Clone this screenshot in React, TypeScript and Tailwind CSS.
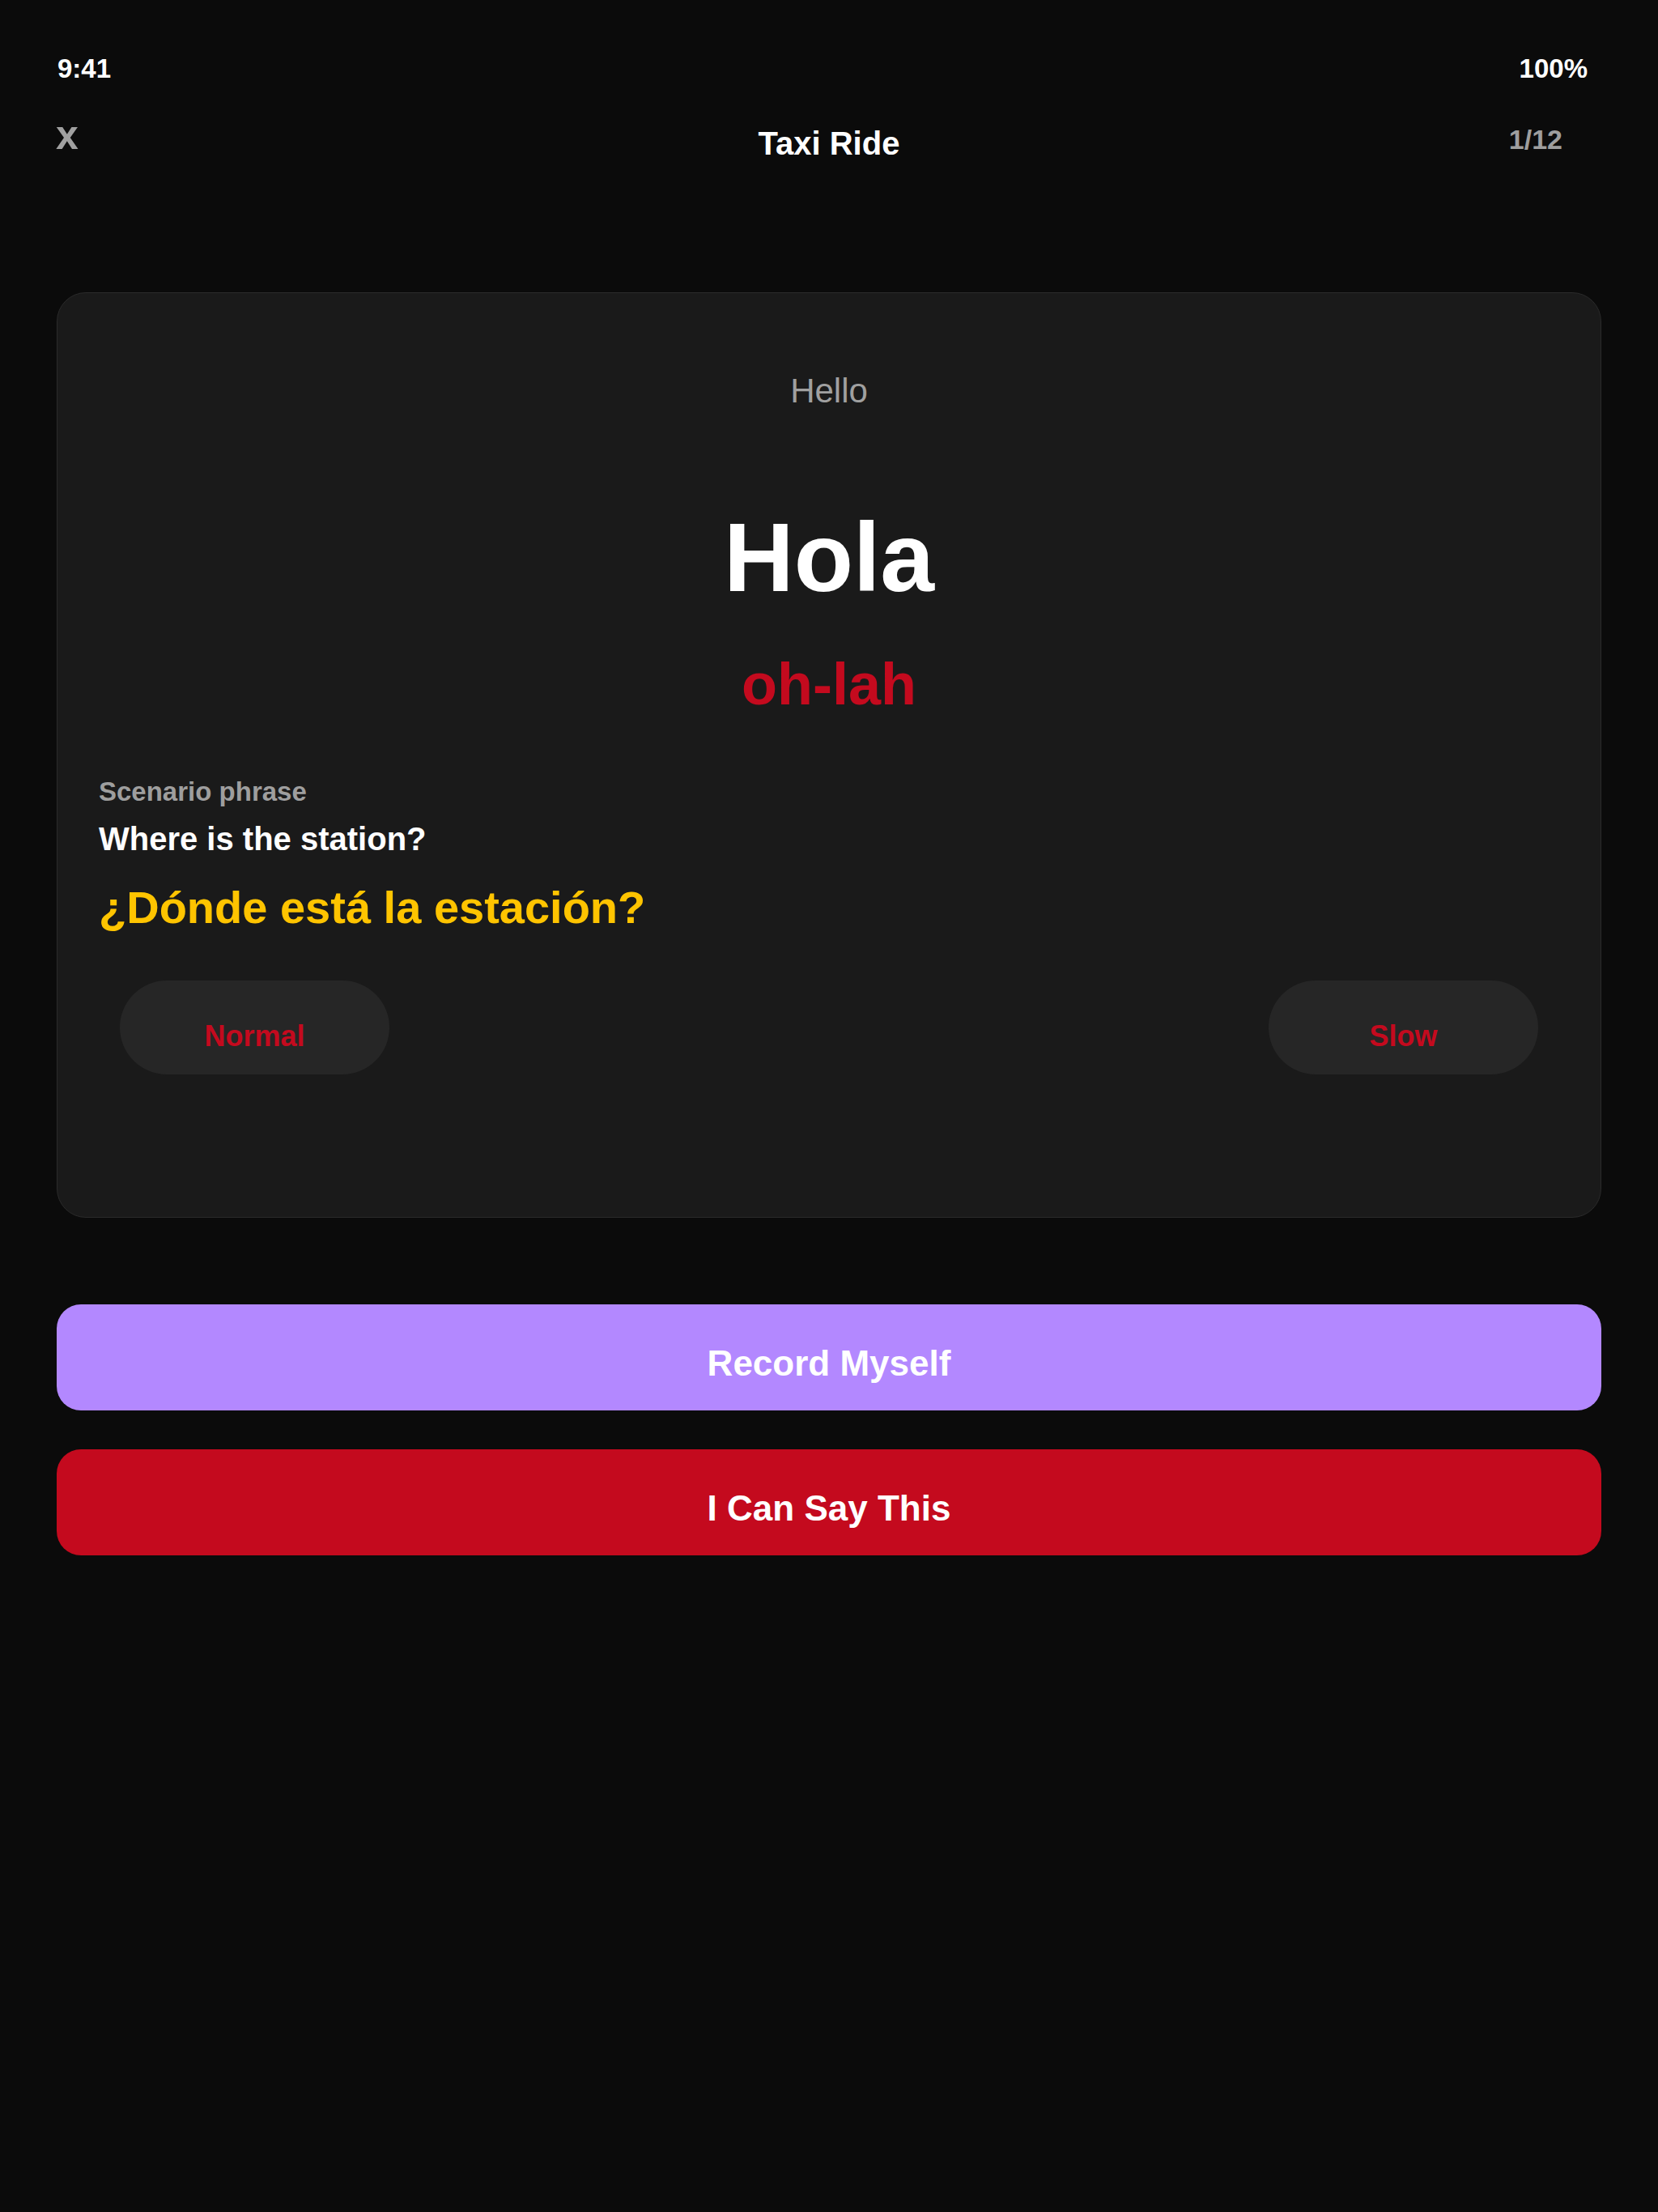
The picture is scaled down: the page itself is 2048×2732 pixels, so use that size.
import React from 'react';

const font = { fontFamily: '"Liberation Sans", Arial, sans-serif' };

function SpeedButton({ label }: { label: string }) {
  return (
    <button
      type="button"
      className="flex h-[116px] w-[333px] items-center justify-center rounded-full bg-[#262626] pt-[22px] text-[36px] font-bold leading-none text-[#c40a1e]"
    >
      {label}
    </button>
  );
}

export default function App() {
  return (
    <div className="min-h-[2732px] w-full bg-[#0b0b0b] text-white" style={font}>
      {/* status bar */}
      <div className="flex items-start justify-between pl-[71px] pr-[87px] pt-[68px] text-[33px] font-bold leading-none">
        <span>9:41</span>
        <span>100%</span>
      </div>

      {/* header */}
      <div className="mt-[40px] grid h-[80px] grid-cols-3 items-start">
        <span className="mt-[1px] pl-[69px] text-[50px] font-bold leading-none text-[#a0a0a0]">x</span>
        <span className="mt-[16px] text-center text-[40px] font-bold leading-none">Taxi Ride</span>
        <span className="mt-[14px] pr-[118px] text-right text-[34px] font-bold leading-none text-[#9e9e9e]">1/12</span>
      </div>

      {/* phrase card */}
      <div className="mx-[70px] mt-[140px] rounded-[36px] border border-[#2b2b2b] bg-[#1a1a1a] px-[51px] pb-[176px] pt-[100px]">
        <div className="text-center text-[42px] leading-none text-[#a0a0a0]">Hello</div>
        <div className="mt-[124px] text-center text-[120px] font-bold leading-none text-white">Hola</div>
        <div className="mt-[61px] text-center text-[72px] font-bold leading-none text-[#c40a1e]">oh-lah</div>

        <div className="mt-[80px] text-[33px] font-bold leading-none text-[#9e9e9e]">Scenario phrase</div>
        <div className="mt-[22px] text-[40px] font-bold leading-none text-white">Where is the station?</div>
        <div className="mt-[37px] text-[56px] font-bold leading-none text-[#ffc400]">¿Dónde está la estación?</div>

        <div className="mt-[62px] flex justify-between px-[26px]">
          <SpeedButton label="Normal" />
          <SpeedButton label="Slow" />
        </div>
      </div>

      {/* actions */}
      <div className="mx-[70px] mt-[107px] flex flex-col gap-[48px]">
        <button
          type="button"
          className="flex h-[131px] w-full items-center justify-center rounded-[30px] bg-[#b388ff] pt-[15px] text-[44px] font-bold leading-none text-white"
        >
          Record Myself
        </button>
        <button
          type="button"
          className="flex h-[131px] w-full items-center justify-center rounded-[30px] bg-[#c40a1e] pt-[15px] text-[44px] font-bold leading-none text-white"
        >
          I Can Say This
        </button>
      </div>
    </div>
  );
}
